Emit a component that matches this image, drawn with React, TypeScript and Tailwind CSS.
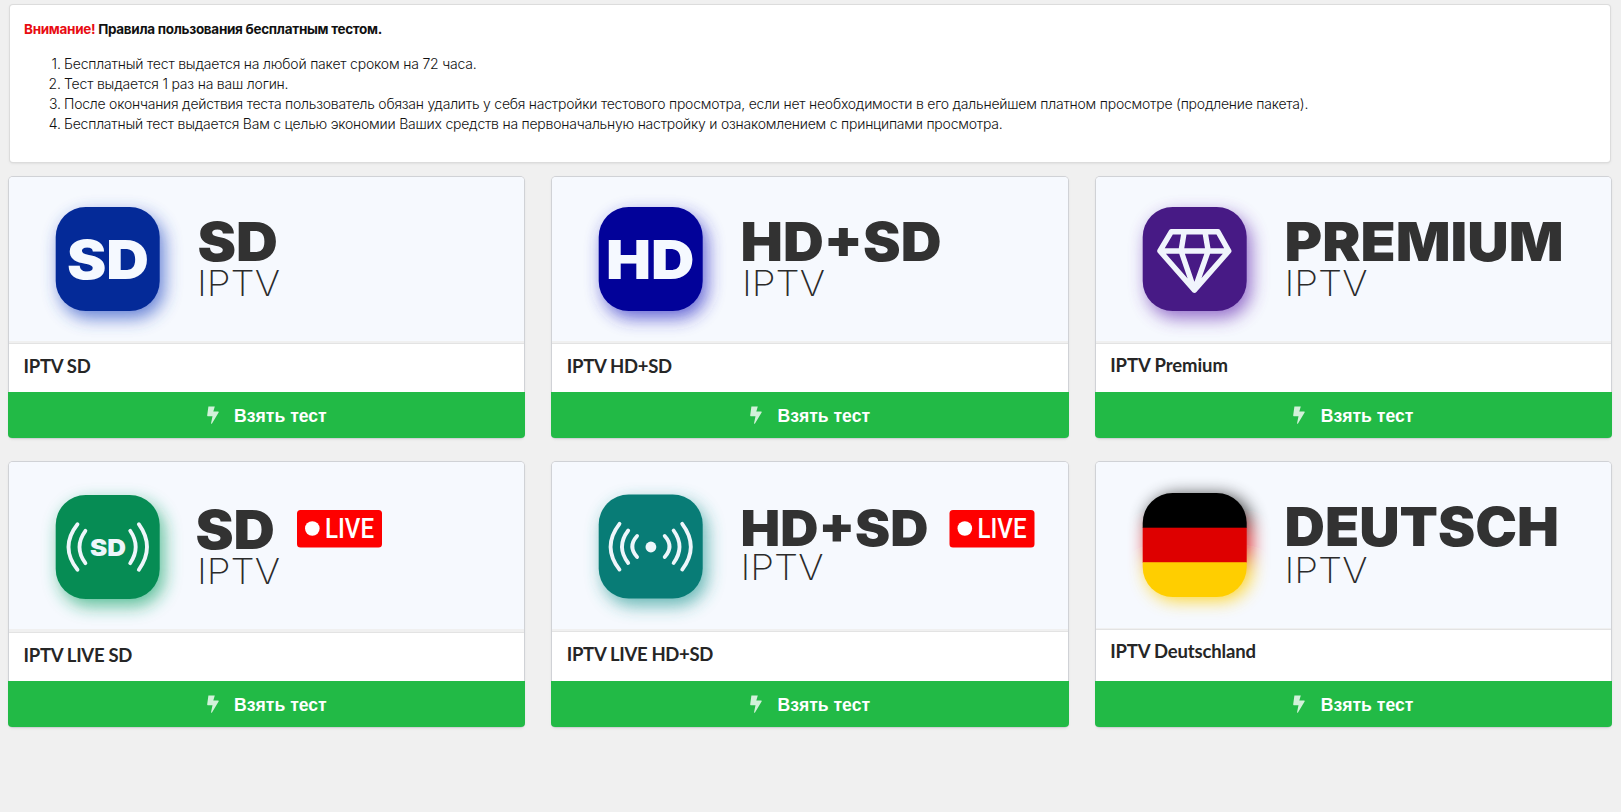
import React from "react";

type Word = { x: number; y: number; w: number; size: number };

function Heavy({ x, y, w, size, fill = "#323232", children }: Word & { fill?: string; children: string }) {
  return (
    <text x={x} y={y} textLength={w} lengthAdjust="spacingAndGlyphs" fontSize={size} fill={fill} className="font-[Inter,sans-serif] font-black">
      {children}
    </text>
  );
}

function Iptv({ x, y }: { x: number; y: number }) {
  return (
    <text x={x} y={y} textLength={83} lengthAdjust="spacingAndGlyphs" fontSize={35} fill="#2b2b2b" className="font-[Inter,sans-serif] font-extralight">
      IPTV
    </text>
  );
}

function Tile({ y, color, shadow }: { y: number; color: string; shadow: string }) {
  return (
    <>
      <rect x={51} y={y + 7} width={104} height={104} rx={30} fill={shadow} opacity={0.72} filter="url(#soft)" />
      <rect x={46.7} y={y} width={104} height={104} rx={30} fill={color} />
    </>
  );
}

function Live({ x, y }: { x: number; y: number }) {
  return (
    <>
      <rect x={x} y={y} width={85} height={37.5} rx={3.5} fill="#fe0000" />
      <circle cx={x + 15.3} cy={y + 18.5} r={7.3} fill="#fff" />
      <text x={x + 28} y={y + 28.3} textLength={49} lengthAdjust="spacingAndGlyphs" fontSize={27.5} fill="#fff" className="font-[Roboto,sans-serif] font-medium">
        LIVE
      </text>
    </>
  );
}

function Canvas({ children }: { children: React.ReactNode }) {
  return (
    <svg width="515" height="166" viewBox="0 0 515 166" className="block">
      <defs>
        <filter id="soft" x="-40%" y="-40%" width="180%" height="180%">
          <feGaussianBlur stdDeviation="9" />
        </filter>
      </defs>
      {children}
    </svg>
  );
}

const arc = "fill-none stroke-[#eef6fb] [stroke-linecap:round]";

const banners: Record<string, React.ReactNode> = {
  sd: (
    <Canvas>
      <Tile y={30} color="#042a98" shadow="#2b4fc4" />
      <Heavy x={58} y={101.7} w={82} size={53} fill="#f5f9ff">SD</Heavy>
      <Heavy x={188.5} y={84} w={80.5} size={53}>SD</Heavy>
      <Iptv x={188} y={118.8} />
    </Canvas>
  ),
  hd: (
    <Canvas>
      <Tile y={30} color="#020299" shadow="#2c2cc4" />
      <Heavy x={54} y={101.7} w={88.5} size={53} fill="#f5f9ff">HD</Heavy>
      <Heavy x={188.5} y={83.5} w={201} size={53}>HD+SD</Heavy>
      <Iptv x={190} y={119} />
    </Canvas>
  ),
  premium: (
    <Canvas>
      <Tile y={30} color="#471a85" shadow="#6c35b5" />
      <path d="M75.4 54.7H122L132.8 74L98.4 113.2L63.9 74ZM63.9 74H132.8M88.2 54.7L85.1 74L98.4 113M109 54.7L112.2 74L98.4 113" fill="none" stroke="#f0f4fc" strokeWidth="5.4" strokeLinejoin="round" />
      <Heavy x={188.5} y={84} w={279} size={54}>PREMIUM</Heavy>
      <Iptv x={188.5} y={118.7} />
    </Canvas>
  ),
  liveSd: (
    <Canvas>
      <Tile y={33} color="#068c54" shadow="#1fa870" />
      <path d="M68.5 62.2Q50.5 85 68.5 107.8M76.4 68.8Q64.6 85 76.4 101.2M129.8 62.2Q146.2 85 129.8 107.8M121.2 68.8Q132.2 85 121.2 101.2" strokeWidth={3.8} className={arc} />
      <Heavy x={81} y={94.3} w={36} size={23.5} fill="#eef6fb">SD</Heavy>
      <Heavy x={186.5} y={87} w={79.5} size={53}>SD</Heavy>
      <Iptv x={188} y={121.7} />
      <Live x={288} y={48} />
    </Canvas>
  ),
  liveHd: (
    <Canvas>
      <Tile y={32.5} color="#087c76" shadow="#2a9c96" />
      <circle cx={98.9} cy={85} r={5.4} fill="#eef6fb" />
      <path d="M67.5 61.8Q49.7 84.7 67.5 107.6M76.2 68.5Q63.8 84.7 76.2 101M85.1 74Q75.5 84.5 85.1 95M130.2 61.8Q147.4 84.7 130.2 107.6M121.6 68.5Q133.4 84.7 121.6 101M112.7 74Q122.3 84.5 112.7 95" strokeWidth={3.8} className={arc} />
      <Heavy x={188.5} y={84.3} w={188} size={50}>HD+SD</Heavy>
      <Iptv x={188.5} y={118} />
      <Live x={397.5} y={48} />
    </Canvas>
  ),
  deutsch: (
    <Canvas>
      <defs>
        <clipPath id="flagShape">
          <rect x={46.7} y={31} width={104} height={104} rx={30} />
        </clipPath>
        <g id="flag" clipPath="url(#flagShape)">
          <rect x={46} y={31} width={105} height={35} fill="#000" />
          <rect x={46} y={65.7} width={105} height={35} fill="#de0000" />
          <rect x={46} y={100.3} width={105} height={35} fill="#ffce00" />
        </g>
      </defs>
      <g opacity={0.85} filter="url(#soft)">
        <use href="#flag" x={4} y={3} />
      </g>
      <use href="#flag" />
      <Heavy x={188.5} y={84} w={274.5} size={53}>DEUTSCH</Heavy>
      <Iptv x={188.5} y={120.5} />
    </Canvas>
  ),
};

const packages = [
  { key: "sd", title: "IPTV SD", image: "h-[166px] border-b-2", row: "h-[261px]", text: "pt-[10px]", track: "tracking-[-0.28px]" },
  { key: "hd", title: "IPTV HD+SD", image: "h-[166px] border-b-2", row: "h-[261px]", text: "pt-[10px]", track: "tracking-[-0.3px]" },
  { key: "premium", title: "IPTV Premium", image: "h-[166px] border-b-2", row: "h-[261px]", text: "pt-[9px]", track: "tracking-[-0.08px]" },
  { key: "liveSd", title: "IPTV LIVE SD", image: "h-[170px] border-b-3", row: "h-[265px]", text: "pt-[10px]", track: "tracking-[-0.28px]" },
  { key: "liveHd", title: "IPTV LIVE HD+SD", image: "h-[169px] border-b-2", row: "h-[265px]", text: "pt-[10px]", track: "tracking-[-0.32px]" },
  { key: "deutsch", title: "IPTV Deutschland", image: "h-[167px] border-b", row: "h-[265px]", text: "pt-[9px]", track: "tracking-[-0.16px]" },
];

const rules = [
  { text: "Бесплатный тест выдается на любой пакет сроком на 72 часа.", track: "tracking-[-0.19px]" },
  { text: "Тест выдается 1 раз на ваш логин.", track: "tracking-[-0.2px]" },
  { text: "После окончания действия теста пользователь обязан удалить у себя настройки тестового просмотра, если нет необходимости в его дальнейшем платном просмотре (продление пакета).", track: "tracking-[-0.23px]" },
  { text: "Бесплатный тест выдается Вам с целью экономии Ваших средств на первоначальную настройку и ознакомлением с принципами просмотра.", track: "tracking-[-0.23px]" },
];

export default function App() {
  return (
    <div className="h-[812px] w-[1621px] overflow-hidden bg-[#f0f0f0] pt-[5px]">
      <section className="ml-[10px] h-[157px] w-[1600px] rounded-[3px] bg-white px-[14px] pt-[14px] font-[Inter,sans-serif] text-[14px] leading-5 text-[#111111] shadow-[0_0_0_1px_#dcdcdc,0_1px_3px_0_#d0d0d0]">
        <p className="text-[13.5px] font-bold leading-5 tracking-[-0.3px]">
          <span className="text-[#e80c12]">Внимание!</span> Правила пользования бесплатным тестом.
        </p>
        <ol className="mt-[15px] font-light">
          {rules.map((r, i) => (
            <li key={i} className="flex whitespace-nowrap">
              <span className="w-[40px] pr-[3px] text-right">{i + 1}.</span>
              <span className={r.track}>{r.text}</span>
            </li>
          ))}
        </ol>
      </section>

      <main className="ml-[9px] mt-[15px] grid w-[1602px] grid-cols-3 gap-x-[28px] gap-y-[24px]">
        {packages.map((p) => (
          <article key={p.key} className={`${p.row} flex flex-col rounded-[4px] bg-white shadow-[0_0_0_1px_#d0d2d6,0_1px_3px_0_#d4d4d5]`}>
            <div className={`${p.image} overflow-hidden rounded-t-[4px] border-[#f0f0f0] bg-[#f6f9fe]`}>{banners[p.key]}</div>
            <div className={`${p.text} flex-1 border-t border-[#e3e3e3] px-[14.5px]`}>
              <h2 className={`${p.track} font-[Lato,sans-serif] text-[18.5px] font-bold leading-6 text-[#262626]`}>{p.title}</h2>
            </div>
            <button className="-mx-px flex h-[46px] shrink-0 items-center justify-center rounded-b-[4px] bg-[#22ba46] font-['Liberation_Sans',sans-serif] text-[17.6px] font-bold text-white">
              <svg width="12" height="18" viewBox="0 0 12 18" className="mr-[15.5px] block opacity-80">
                <path d="M1.4 0.4H7.8L6.3 5.5H11.2Q12 5.6 11.6 6.4L5 17.6Q3.9 18.2 4.1 17.1L5.5 10.2H0.8Q0.1 10.1 0.2 9.3Z" fill="#fff" />
              </svg>
              <span className="pt-[2px]">Взять тест</span>
            </button>
          </article>
        ))}
      </main>
    </div>
  );
}
